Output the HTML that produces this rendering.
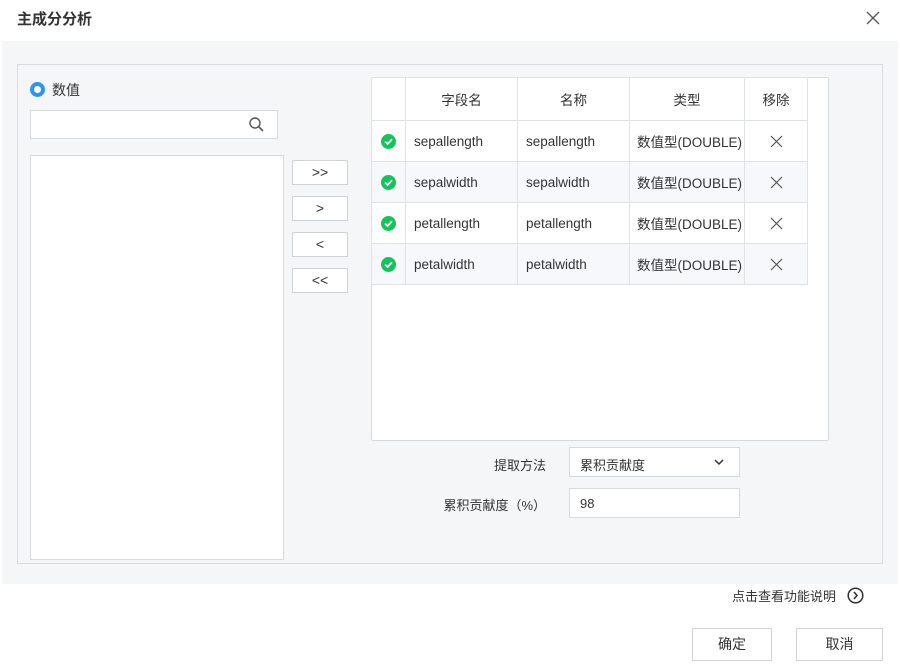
<!DOCTYPE html><html><head><meta charset="utf-8"><style>
*{box-sizing:border-box;margin:0;padding:0}
body{width:900px;height:672px;background:#fff;font-family:"Liberation Sans","Noto Sans CJK SC",sans-serif;font-size:13px;color:#333;position:relative;overflow:hidden}
.a{position:absolute}
.b{border:1px solid #d6d9de;background:#fff}
.btn{position:absolute;border:1px solid #cfd2d6;background:#fff;text-align:center;font-size:14px;color:#333}
td{border:1px solid #dfe2e6;height:41px;padding:0 8px;font-size:13.5px;color:#333;vertical-align:middle}
td svg{display:block;margin:0 auto}
th{border:1px solid #dfe2e6;height:43px;font-weight:normal;font-size:13.5px;color:#333}
tr.g td{background:#f7f8fc}
</style></head><body>
<div class="a" style="left:17px;top:8px;font-size:15px;font-weight:bold;color:#333">主成分分析</div>
<svg class="a" style="left:866px;top:11px" width="14" height="14"><path d="M1 1L13 13M13 1L1 13" stroke="#555" stroke-width="1.3"/></svg>
<div class="a" style="left:2px;top:41px;width:896px;height:543px;background:#f5f6f8"></div>
<div class="a" style="left:17px;top:64px;width:866px;height:500px;border:1px solid #d8dbdf;background:#f5f6f8"></div>
<div class="a" style="left:30px;top:82px;width:15px;height:15px;border-radius:50%;border:4px solid #2f95ee;background:#fff"></div>
<div class="a" style="left:52px;top:80px;font-size:14px">数值</div>
<div class="a b" style="left:30px;top:110px;width:248px;height:29px"></div>
<svg class="a" style="left:248px;top:116px" width="17" height="17"><circle cx="7" cy="7" r="5" fill="none" stroke="#555" stroke-width="1.4"/><path d="M11 11L15 15" stroke="#555" stroke-width="1.6"/></svg>
<div class="a b" style="left:30px;top:155px;width:254px;height:405px"></div>
<div class="btn" style="left:292px;top:160px;width:56px;height:25px;line-height:22px">&gt;&gt;</div>
<div class="btn" style="left:292px;top:196px;width:56px;height:25px;line-height:22px">&gt;</div>
<div class="btn" style="left:292px;top:232px;width:56px;height:25px;line-height:22px">&lt;</div>
<div class="btn" style="left:292px;top:268px;width:56px;height:25px;line-height:22px">&lt;&lt;</div>
<div class="a b" style="left:371px;top:77px;width:458px;height:364px;border-radius:2px"></div>
<table class="a" style="left:371px;top:77px;border-collapse:collapse;width:436px;table-layout:fixed">
<colgroup><col style="width:34px"><col style="width:112px"><col style="width:112px"><col style="width:115px"><col style="width:63px"></colgroup>
<tr><th></th><th>字段名</th><th>名称</th><th>类型</th><th>移除</th></tr>
<tr><td style="padding:0"><svg width="15" height="15"><circle cx="7.5" cy="7.5" r="7.5" fill="#13c45a"/><path d="M4 7.5L6.6 10L11 5.3" fill="none" stroke="#fff" stroke-width="1.8"/></svg></td><td>sepallength</td><td>sepallength</td><td style="padding:0 7px;white-space:nowrap">数值型(DOUBLE)</td><td><svg width="13" height="13"><path d="M1 1L12 12M12 1L1 12" stroke="#555" stroke-width="1.2"/></svg></td></tr>
<tr class="g"><td style="padding:0"><svg width="15" height="15"><circle cx="7.5" cy="7.5" r="7.5" fill="#13c45a"/><path d="M4 7.5L6.6 10L11 5.3" fill="none" stroke="#fff" stroke-width="1.8"/></svg></td><td>sepalwidth</td><td>sepalwidth</td><td style="padding:0 7px;white-space:nowrap">数值型(DOUBLE)</td><td><svg width="13" height="13"><path d="M1 1L12 12M12 1L1 12" stroke="#555" stroke-width="1.2"/></svg></td></tr>
<tr><td style="padding:0"><svg width="15" height="15"><circle cx="7.5" cy="7.5" r="7.5" fill="#13c45a"/><path d="M4 7.5L6.6 10L11 5.3" fill="none" stroke="#fff" stroke-width="1.8"/></svg></td><td>petallength</td><td>petallength</td><td style="padding:0 7px;white-space:nowrap">数值型(DOUBLE)</td><td><svg width="13" height="13"><path d="M1 1L12 12M12 1L1 12" stroke="#555" stroke-width="1.2"/></svg></td></tr>
<tr class="g"><td style="padding:0"><svg width="15" height="15"><circle cx="7.5" cy="7.5" r="7.5" fill="#13c45a"/><path d="M4 7.5L6.6 10L11 5.3" fill="none" stroke="#fff" stroke-width="1.8"/></svg></td><td>petalwidth</td><td>petalwidth</td><td style="padding:0 7px;white-space:nowrap">数值型(DOUBLE)</td><td><svg width="13" height="13"><path d="M1 1L12 12M12 1L1 12" stroke="#555" stroke-width="1.2"/></svg></td></tr>
</table>
<div class="a" style="left:400px;top:455px;width:146px;text-align:right">提取方法</div>
<div class="a b" style="left:569px;top:447px;width:171px;height:30px;padding:7px 10px">累积贡献度</div>
<svg class="a" style="left:714px;top:459px" width="10" height="7"><path d="M1 1L5 5L9 1" fill="none" stroke="#333" stroke-width="1.5"/></svg>
<div class="a" style="left:380px;top:495px;width:166px;text-align:right">累积贡献度（%）</div>
<div class="a b" style="left:569px;top:488px;width:171px;height:30px;padding:7px 10px">98</div>
<div class="a" style="left:732px;top:586px">点击查看功能说明</div>
<svg class="a" style="left:847px;top:587px" width="17" height="17"><circle cx="8.5" cy="8.5" r="7.3" fill="none" stroke="#333" stroke-width="1.5"/><path d="M7 5L10 8.5L7 12" fill="none" stroke="#333" stroke-width="1.6"/></svg>
<div class="btn" style="left:692px;top:628px;width:80px;height:33px;line-height:31px">确定</div>
<div class="btn" style="left:796px;top:628px;width:87px;height:33px;line-height:31px">取消</div>
</body></html>
